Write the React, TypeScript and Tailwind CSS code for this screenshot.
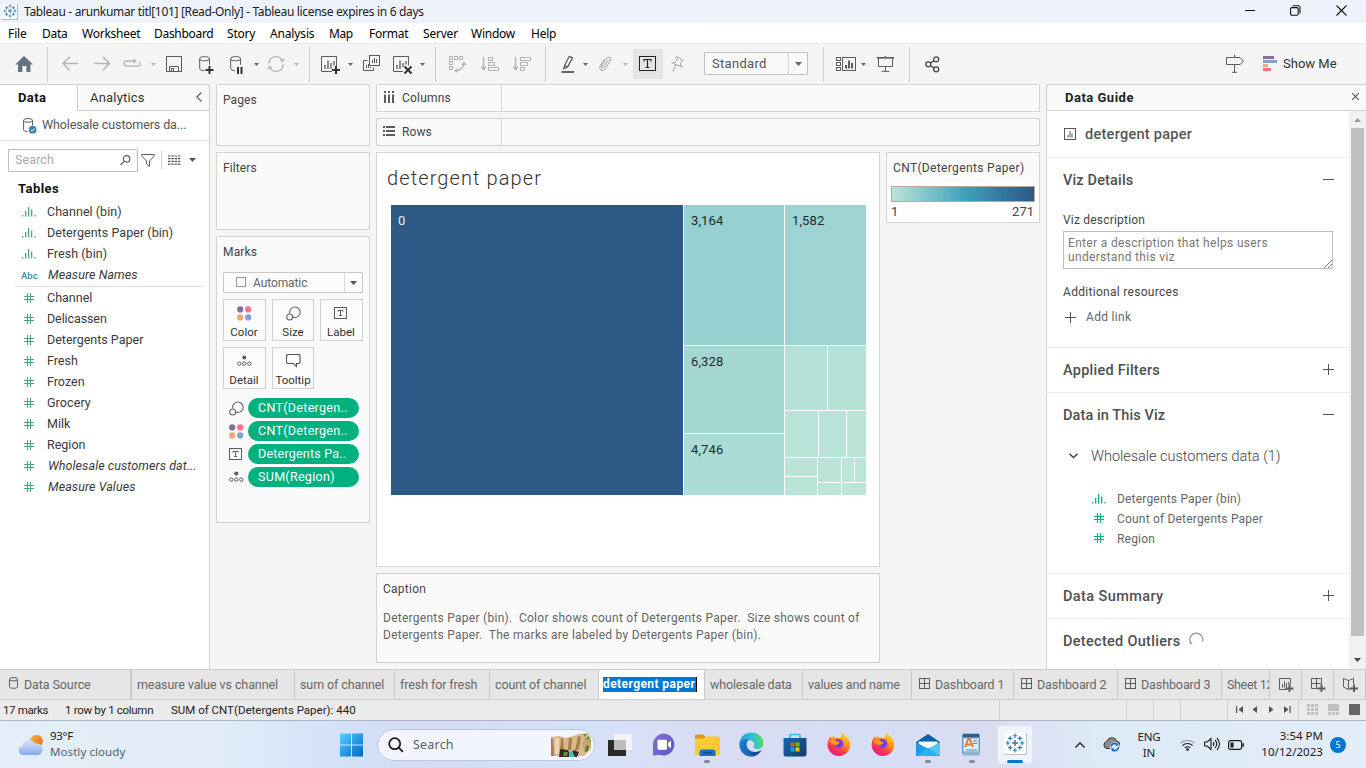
import React from "react";

type IconProps = { w: number; h: number; className?: string; children: React.ReactNode; stroke?: string; fill?: string; sw?: number };

function Svg({ w, h, className = "", children, stroke = "#5c5c5c", fill = "none", sw = 1 }: IconProps) {
  return (
    <svg width={w} height={h} viewBox={`0 0 ${w} ${h}`} className={`block shrink-0 ${className}`} fill={fill} stroke={stroke} strokeWidth={sw}>
      {children}
    </svg>
  );
}

function Cell({ className, children }: { className: string; children?: React.ReactNode }) {
  return <div className={`flex h-full shrink-0 items-center ${className}`}>{children}</div>;
}

function Sep({ className }: { className: string }) {
  return (
    <div className={`flex h-full shrink-0 items-center ${className}`}>
      <div className="mt-[1px] h-[35px] w-px bg-[#cfcfcf]" />
    </div>
  );
}

function Caret({ className = "-ml-[1px]", color = "#666" }: { className?: string; color?: string }) {
  return (
    <Svg w={5} h={3} className={className} stroke="none" fill={color}>
      <path d="M0 0h5L2.5 3z" />
    </Svg>
  );
}

function Sparkle({ size }: { size: number }) {
  return (
    <svg width={size} height={size} viewBox="0 0 20 20" fill="none" className="block shrink-0">
      <g stroke="#2f7fae" strokeWidth="1.3">
        <path d="M10 7v6M7 10h6" stroke="#4c7389" strokeWidth="1.5" />
        <path d="M10 0.6v4.4M7.8 2.8h4.4M10 15v4.4M7.8 17.2h4.4M0.6 10H5M2.8 7.8v4.4M15 10h4.4M17.2 7.8v4.4" strokeWidth="1.1" />
        <path d="M5.2 3.2v4.4M3 5.4h4.4M14.8 3.2v4.4M12.6 5.4h4.4M5.2 12.4v4.4M3 14.6h4.4M14.8 12.4v4.4M12.6 14.6h4.4" />
      </g>
    </svg>
  );
}

function BinIcon({ color = "#4aa583" }: { color?: string }) {
  return (
    <Svg w={14} h={10} stroke="none" fill={color}>
      <path d="M0 8h1.3v1.6H0zM3 4h1.3v5.6H3zM6 0h1.3v9.6H6zM9 2.6h1.3v7H9zM12.4 8h1.3v1.6h-1.3z" />
    </Svg>
  );
}

function HashIcon({ color = "#4aa583" }: { color?: string }) {
  return (
    <Svg w={11} h={10} stroke={color}>
      <path d="M3.5 0v10M6.5 0v10" strokeWidth="1.1" />
      <path d="M0 3.5h10M0 6.5h10" />
    </Svg>
  );
}

function SizeIcon() {
  return (
    <Svg w={15} h={15} stroke="#666" sw={1.1}>
      <path d="M3.9 7.6A5.2 5.2 0 1 1 6.8 11" />
      <circle cx="3.7" cy="11" r="3" />
    </Svg>
  );
}

function ColorDots() {
  return (
    <Svg w={15} h={15} stroke="none">
      <circle cx="3.2" cy="3.4" r="3.1" fill="#8a6d9b" />
      <circle cx="11.2" cy="3.4" r="3.1" fill="#fb7185" />
      <circle cx="3.2" cy="11.4" r="3.1" fill="#f2a57a" />
      <circle cx="11.2" cy="11.4" r="3.1" fill="#7fa3cf" />
    </Svg>
  );
}

function LabelIcon() {
  return (
    <Svg w={14} h={12} stroke="#5c5c5c">
      <rect x="0.5" y="0.5" width="12" height="11" />
      <path d="M4 4.6V3.4h5v1.2M6.5 3.4v5.2M5 8.5h3" />
    </Svg>
  );
}

function DetailIcon() {
  return (
    <Svg w={15} h={12} stroke="#5c5c5c">
      <circle cx="7.3" cy="2.6" r="2" fill="#5c5c5c" stroke="none" />
      <circle cx="2.3" cy="8.6" r="1.7" />
      <circle cx="7.3" cy="8.6" r="1.7" />
      <circle cx="12.3" cy="8.6" r="1.7" />
    </Svg>
  );
}

function Plus() {
  return (
    <Svg w={11} h={11} stroke="#555">
      <path d="M0 5.5h11M5.5 0v11" />
    </Svg>
  );
}

const menus = [
  ["File", "w-[34px] tracking-[-0.1px]"],
  ["Data", "w-[40px] tracking-[-0.25px]"],
  ["Worksheet", "w-[72px] tracking-[-0.25px]"],
  ["Dashboard", "w-[73px] tracking-[-0.3px]"],
  ["Story", "w-[43px] tracking-[-0.2px]"],
  ["Analysis", "w-[59px] tracking-[-0.15px]"],
  ["Map", "w-[40px] tracking-[-0.4px]"],
  ["Format", "w-[54px] tracking-[-0.25px]"],
  ["Server", "w-[48px] tracking-[-0.2px]"],
  ["Window", "w-[60px] tracking-[-0.25px]"],
  ["Help", "w-[40px] tracking-[-0.25px]"],
];

function TitleBar() {
  return (
    <div className="flex h-[23px] shrink-0 items-center bg-[linear-gradient(90deg,#eef3fb_0%,#eef3fb_48%,#edf3f8_62%,#eef3fb_80%)] pl-[2px] font-['Noto_Sans',sans-serif]">
      <div className="flex h-[16px] w-[16px] items-center justify-center border-r border-b border-[#b4bcc4] bg-white/50">
        <Sparkle size={14} />
      </div>
      <span className="ml-[6px] pt-[1px] text-[12px] leading-none tracking-[-0.33px] text-[#1b1b1b]">
        Tableau - arunkumar titl[101] [Read-Only] - Tableau license expires in 6 days
      </span>
      <div className="mr-[19px] mb-[2px] ml-auto flex items-center">
        <Svg w={10} h={11} stroke="#111" className="mr-[35px]">
          <path d="M0 5.5h10" />
        </Svg>
        <Svg w={11} h={11} stroke="#111" className="mr-[35px]" sw={1.1}>
          <rect x="0.6" y="2.6" width="7.6" height="7.6" rx="1.4" />
          <path d="M2.6 0.8h5.6a1.8 1.8 0 0 1 1.8 1.8v5.8" />
        </Svg>
        <Svg w={11} h={11} stroke="#111" sw={1.1}>
          <path d="M0.5 0.5l10 10M10.5 0.5l-10 10" />
        </Svg>
      </div>
    </div>
  );
}

function Toolbar() {
  const g = "#b4b4b4";
  return (
    <div className="flex h-[41px] shrink-0 items-center border-t border-[#ececec] bg-[#f5f5f5] pl-[15px]">
      <Cell className="w-[32px]">
        <Svg w={19} h={16} stroke="none" fill="#667180">
          <path d="M9 0L18 8.5h-2.6V16H11.4v-6H7.4v6H3V8.5H0.3z" />
        </Svg>
      </Cell>
      <Sep className="w-[15px]" />
      <Cell className="w-[32px]">
        <Svg w={17} h={15} stroke={g} sw={1.5} className="-mt-[1px]">
          <path d="M16 7.5H1M7.6 0.8L1 7.5l6.6 6.7" />
        </Svg>
      </Cell>
      <Cell className="w-[29px]">
        <Svg w={17} h={15} stroke={g} sw={1.5} className="-mt-[1px]">
          <path d="M0 7.5h15.5M8.8 0.8l6.7 6.7-6.7 6.7" />
        </Svg>
      </Cell>
      <Cell className="w-[28px]">
        <Svg w={19} h={10} stroke={g} sw={1.3} className="-mt-[2px]">
          <path d="M12 3H3.5a2.6 2.6 0 0 0 0 5.2h11a2.6 2.6 0 0 0 2-4.5" />
          <path d="M10.5 0.2l3.4 2.8-3.4 2.8z" fill={g} stroke="none" />
        </Svg>
      </Cell>
      <Cell className="w-[15px]"><Caret className="ml-0" color="#b0b0b0" /></Cell>
      <Cell className="w-[33px]">
        <Svg w={16} h={16}>
          <rect x="0.5" y="0.5" width="15" height="15" />
          <path d="M3.5 15.5v-5h9v5" />
          <rect x="5.5" y="12.5" width="2" height="3" />
        </Svg>
      </Cell>
      <Cell className="w-[31px]">
        <Svg w={15} h={18} className="mt-[1px]">
          <path d="M0.7 2.8v9.9c0 1 1.5 1.9 4.8 2M10.5 2.8v6" />
          <ellipse cx="5.6" cy="2.7" rx="4.9" ry="2.1" />
          <path d="M10.5 10v8M6.5 14h8" stroke="#333" strokeWidth="2" />
        </Svg>
      </Cell>
      <Cell className="w-[25px]">
        <Svg w={15} h={18} className="mt-[1px]">
          <path d="M0.7 2.8v9.9c0 1 1.5 1.9 4.3 2M10.5 2.8v6" />
          <ellipse cx="5.6" cy="2.7" rx="4.9" ry="2.1" />
          <path d="M8 11v7M11.5 11v7" stroke="#333" strokeWidth="2" />
        </Svg>
      </Cell>
      <Cell className="w-[12px]"><Caret /></Cell>
      <Cell className="w-[27px]">
        <Svg w={18} h={16} stroke={g} sw={1.3}>
          <path d="M1.8 7.5A7 7 0 0 1 15 4.5M16.2 8.5A7 7 0 0 1 3 11.5" />
          <path d="M12.5 5l3.8 1 .8-3.8zM5.5 11l-3.8-1-.8 3.8z" fill={g} stroke="none" />
        </Svg>
      </Cell>
      <Cell className="w-[15px]"><Caret className="ml-0" color="#b0b0b0" /></Cell>
      <Sep className="w-[12px]" />
      <Cell className="w-[28px]">
        <Svg w={19} h={18} className="mt-[1px]">
          <path d="M11 15.5H0.5V0.5h15v10" />
          <path d="M4 13V9M7 13V4.5M10 13V7M13 9.5V5" strokeWidth="1.3" />
          <path d="M15 10v8M11 14h8" stroke="#333" strokeWidth="2" />
        </Svg>
      </Cell>
      <Cell className="w-[14px]"><Caret /></Cell>
      <Cell className="w-[30px]">
        <Svg w={18} h={16} className="-mt-[2px]">
          <rect x="6.5" y="0.5" width="10" height="10" />
          <path d="M9.5 8V5M11.5 8V3M13.5 8V4" />
          <path d="M4.5 5.5h-4v10h10v-3" />
          <path d="M3.5 13v-3M5.5 13V9M7.5 13v-1" />
        </Svg>
      </Cell>
      <Cell className="w-[28px]">
        <Svg w={19} h={18} className="mt-[1px]">
          <path d="M10 15.5H0.5V0.5h15v9" />
          <path d="M4 13V9M7 13V4.5M10 11V7M13 8.5V5" strokeWidth="1.3" />
          <path d="M11.5 10.5l7 7M18.5 10.5l-7 7" stroke="#333" strokeWidth="2" />
        </Svg>
      </Cell>
      <Cell className="w-[14px]"><Caret /></Cell>
      <Sep className="w-[14px]" />
      <Cell className="w-[32px]">
        <Svg w={18} h={17} stroke={g} className="mt-[1px]">
          <rect x="0.5" y="0.5" width="3" height="3" /><rect x="5.5" y="0.5" width="3" height="3" /><rect x="10.5" y="0.5" width="3" height="3" />
          <rect x="0.5" y="5.5" width="3" height="3" /><rect x="0.5" y="10.5" width="3" height="3" />
          <path d="M15 7c0 4-3 7.500-8.500 7.800" strokeWidth="1.3" />
          <path d="M12.300 9l2.700-3.500L17.700 9zM8.500 12L5 14.800 8.500 17z" fill={g} stroke="none" />
        </Svg>
      </Cell>
      <Cell className="w-[32px]">
        <Svg w={18} h={16} stroke={g} className="-mt-[1px]">
          <path d="M2.5 1v12M0.3 10.5l2.3 3 2.3-3" strokeWidth="1.4" />
          <rect x="7.5" y="1.5" width="4" height="3" /><rect x="7.5" y="6.5" width="6" height="3" /><rect x="7.5" y="11.5" width="10" height="3" />
        </Svg>
      </Cell>
      <Cell className="w-[32px]">
        <Svg w={18} h={16} stroke={g} className="-mt-[1px]">
          <path d="M2.5 1v12M0.3 10.5l2.3 3 2.3-3" strokeWidth="1.4" />
          <rect x="7.5" y="1.5" width="10" height="3" /><rect x="7.5" y="6.5" width="7" height="3" /><rect x="7.5" y="11.5" width="4" height="3" />
        </Svg>
      </Cell>
      <Sep className="w-[16px]" />
      <Cell className="w-[22px]">
        <Svg w={14} h={19} stroke="#555" className="mt-[1px]">
          <path d="M8.3 1.3l3.2 1.6-4.8 9-3-1.7zM3.7 10.2l-1 3.6 4-1.9" strokeWidth="1.2" strokeLinejoin="round" />
          <path d="M0.5 17h12.5" strokeWidth="2" stroke="#666" />
        </Svg>
      </Cell>
      <Cell className="w-[16px]"><Caret className="ml-0" /></Cell>
      <Cell className="w-[24px]">
        <Svg w={13} h={16} stroke={g} sw={1.2}>
          <path d="M9.5 4L4.7 11c-1 1.6-3 .3-2-1.2L7.5 2.5C9.3-.2 13 1.8 11.3 4.8L6.5 12.5C4 16.3-.8 13.5 1.3 9.5L5.5 3" />
        </Svg>
      </Cell>
      <Cell className="w-[10px]"><Caret className="ml-0" color="#b0b0b0" /></Cell>
      <Cell className="w-[38px]">
        <div className="flex h-[30px] w-[30px] items-center justify-center bg-[#e4e4e4]">
          <Svg w={18} h={16} stroke="#222">
            <rect x="0.5" y="0.5" width="16" height="14" />
            <path d="M5 5.5v-2h7v2M8.5 3.5v8M6.5 11.5h4" strokeWidth="1.2" />
          </Svg>
        </div>
      </Cell>
      <Cell className="w-[33px]">
        <Svg w={13} h={16} stroke={g} sw={1.1} className="-mt-[1px]">
          <path d="M5.5 0.8l6.5 3-1.5 1.5-1 3 1.5 2.5L1 7l3-1 2.5-3zM5.2 9.2L1.5 15.5" />
        </Svg>
      </Cell>
      <Cell className="w-[119px]">
        <div className="-mt-[1px] flex h-[23px] w-[104px] items-center rounded-[1px] border border-[#c4c4c4] bg-[#fafafa]">
          <span className="w-[84px] pb-[1px] pl-[7px] text-[13px] leading-none tracking-[0.3px] text-[#555]">Standard</span>
          <div className="flex h-full w-[19px] items-center justify-center border-l border-[#d8d8d8]">
            <Svg w={7} h={4} stroke="none" fill="#666"><path d="M0 0h7L3.5 4z" /></Svg>
          </div>
        </div>
      </Cell>
      <Sep className="w-[13px]" />
      <Cell className="w-[25px]">
        <Svg w={20} h={14}>
          <rect x="0.5" y="0.5" width="4" height="3" /><rect x="0.5" y="5.5" width="4" height="3" /><rect x="0.5" y="10.5" width="4" height="3" />
          <rect x="6.5" y="0.5" width="13" height="13" />
          <path d="M10 11.5V8M13 11.5V3.5M16 11.5V6" strokeWidth="2" />
        </Svg>
      </Cell>
      <Cell className="w-[16px]"><Caret className="ml-0" /></Cell>
      <Cell className="w-[32px]">
        <Svg w={17} h={16}>
          <path d="M0 1.8h17" strokeWidth="1.6" />
          <path d="M1.5 2v8.5h14V2M8.5 0v2M8.5 10.5v5M4.5 15.3h8" />
        </Svg>
      </Cell>
      <Sep className="w-[16px]" />
      <Cell className="w-[301px]">
        <Svg w={15} h={17} stroke="#444" sw={1.3}>
          <circle cx="3.3" cy="8.3" r="2.5" /><circle cx="11.2" cy="3.3" r="2.5" /><circle cx="11.2" cy="13.3" r="2.5" />
          <path d="M5.5 7L9 4.6M5.5 9.7L9 12" />
        </Svg>
      </Cell>
      <Cell className="w-[37px]">
        <Svg w={19} h={18}>
          <path d="M0.5 2.5H14l3.5 3.7L14 9.5H0.5zM8.5 0v2.5M8.5 9.5v8M6 17.3h5" />
        </Svg>
      </Cell>
      <Svg w={14} h={15} stroke="none" className="-mt-[2px]">
        <path d="M0 0h11v3H0z" fill="#8a6d9b" /><path d="M0 4h14v3H0z" fill="#7fa3cf" /><path d="M0 8h5v3H0z" fill="#f7a57b" /><path d="M0 12h8v3H0z" fill="#fb6a80" />
      </Svg>
      <span className="ml-[6px] pb-[2px] text-[13px] leading-none whitespace-nowrap text-[#333]">Show Me</span>
    </div>
  );
}

function Field({ kind, label, italic, cls = "" }: { kind: "bin" | "hash" | "abc"; label: string; italic?: boolean; cls?: string }) {
  return (
    <div className="flex h-[21px] items-center text-[12.5px] leading-none text-[#3a3a3a]">
      <div className="flex w-[47px] items-center pl-[22px]">
        {kind === "bin" && <BinIcon />}
        {kind === "hash" && <div className="pl-[2px]"><HashIcon /></div>}
        {kind === "abc" && <span className="-ml-[1px] pt-[2px] text-[9.5px] font-medium text-[#3b87a5]">Abc</span>}
      </div>
      <span className={`pt-[2px] whitespace-nowrap ${italic ? "pl-[1px] tracking-[0.08px] italic" : ""} ${cls}`}>{label}</span>
    </div>
  );
}

function DataPane() {
  return (
    <div className="flex w-[210px] shrink-0 flex-col border-t border-r border-[#d0d0d0] bg-white">
      <div className="flex h-[26px]">
        <div className="flex w-[77px] items-center pb-[1px] pl-[18px] text-[13px] leading-none font-bold tracking-[0.4px] text-[#111]">Data</div>
        <div className="flex flex-1 items-center border-b border-l border-[#d0d0d0] bg-[#fafafa] pb-[1px] pl-[12px] text-[13px] leading-none tracking-[0.2px] text-[#333]">
          Analytics
          <Svg w={6} h={10} className="-mt-[1px] mr-[7px] ml-auto" sw={1.2}><path d="M5.5 0.5L0.8 5l4.7 4.5" /></Svg>
        </div>
      </div>
      <div className="flex h-[30px] items-center border-b border-[#e2e2e2] pl-[23px] text-[12.5px] leading-none tracking-[-0.1px] text-[#555]">
        <Svg w={14} h={16} className="mt-[1px]">
          <path d="M0.6 2.4v9.5c0 .9 1.5 1.5 4 1.6M9.5 2.4v5" />
          <ellipse cx="5" cy="2.4" rx="4.5" ry="1.9" />
          <circle cx="9.6" cy="11.7" r="3.9" fill="#3b87a5" stroke="none" />
          <path d="M7.8 11.7l1.4 1.4 2.3-2.6" stroke="#fff" />
        </Svg>
        <span className="ml-[5px]">Wholesale customers da...</span>
      </div>
      <div className="mt-[7px] flex h-[24px] items-center pl-[8px]">
        <div className="flex h-[23px] w-[130px] items-center rounded-[1px] border border-[#bdbdbd] pt-[1px] pr-[6px] pl-[6px] text-[12.5px] leading-none tracking-[0.1px] text-[#aaa]">
          Search
          <Svg w={11} h={11} className="ml-auto" sw={1.2}>
            <circle cx="6.6" cy="3.9" r="3.2" /><path d="M4.2 6.4L0.6 10" />
          </Svg>
        </div>
        <Svg w={14} h={13} className="ml-[3px]"><path d="M0.7 0.5h12.4v1.5L8.5 7v5.3L5.5 10V7L0.7 2z" /></Svg>
        <div className="ml-[6px] h-[18px] w-px bg-[#d0d0d0]" />
        <Svg w={13} h={10} className="-mt-[1px] ml-[6px]" stroke="#555" sw={1.2}>
          <path d="M0 1h12.5M0 3.7h12.5M0 6.4h12.5M0 9.1h12.5" strokeDasharray="2.5 0.8" />
        </Svg>
        <Svg w={7} h={4} className="-mt-[1px] ml-[8px]" stroke="none" fill="#555"><path d="M0 0h7L3.5 4z" /></Svg>
      </div>
      <div className="flex h-[29px] items-center pt-[3px] pl-[18px] text-[13px] leading-none font-bold tracking-[0.45px] text-[#111]">Tables</div>
      <Field kind="bin" label="Channel (bin)" cls="tracking-[0.05px]" />
      <Field kind="bin" label="Detergents Paper (bin)" cls="tracking-[0.05px]" />
      <Field kind="bin" label="Fresh (bin)" cls="tracking-[0.05px]" />
      <Field kind="abc" label="Measure Names" italic />
      <div className="mr-[6px] ml-[15px] h-[2px] shrink-0 border-b border-[#e0e0e0]" />
      <Field kind="hash" label="Channel" />
      <Field kind="hash" label="Delicassen" cls="tracking-[-0.1px]" />
      <Field kind="hash" label="Detergents Paper" />
      <Field kind="hash" label="Fresh" />
      <Field kind="hash" label="Frozen" />
      <Field kind="hash" label="Grocery" cls="tracking-[0.1px]" />
      <Field kind="hash" label="Milk" />
      <Field kind="hash" label="Region" />
      <Field kind="hash" label="Wholesale customers dat..." italic />
      <Field kind="hash" label="Measure Values" italic />
    </div>
  );
}

const card = "border border-[#d4d4d4] bg-[#fafafa]";

function MarkButton({ label, children, className }: { label: string; children: React.ReactNode; className: string }) {
  return (
    <div className={`flex h-[42px] flex-col items-center border border-[#d0d0d0] bg-[#fcfcfc] ${className}`}>
      <div className="flex h-[26px] items-center">{children}</div>
      <span className="pt-[1px] text-[11.5px] leading-none whitespace-nowrap text-[#333]">{label}</span>
    </div>
  );
}

function Pill({ icon, label, cls = "tracking-[0.3px]" }: { icon: React.ReactNode; label: string; cls?: string }) {
  return (
    <div className="flex h-[20px] items-center">
      <div className="-ml-[1px] flex w-[19px] items-center">{icon}</div>
      <div className={`flex h-[20px] w-[111px] items-center rounded-full bg-[#00b180] pl-[10px] text-[12.5px] leading-none text-white ${cls}`}>{label}</div>
    </div>
  );
}

function Shelves() {
  return (
    <div className="flex w-[154px] shrink-0 flex-col text-[12px] leading-none text-[#444]">
      <div className={`h-[62px] ${card} pt-[9px] pl-[6px] tracking-[0.1px]`}>Pages</div>
      <div className={`mt-[6px] h-[78px] ${card} pt-[9px] pl-[6px] tracking-[0.1px]`}>Filters</div>
      <div className={`mt-[6px] flex h-[287px] flex-col ${card} pl-[6px]`}>
        <div className="pt-[9px] tracking-[0.15px]">Marks</div>
        <div className="mt-[14px] flex h-[21px] w-[140px] items-center rounded-[1px] border border-[#c8c8c8] bg-[#fcfcfc]">
          <div className="-mt-[1px] ml-[12px] h-[10px] w-[10px] border border-[#999]" />
          <span className="ml-[7px] w-[91px] text-[12px] tracking-[-0.1px] text-[#666]">Automatic</span>
          <div className="flex h-full flex-1 items-center justify-center border-l border-[#d8d8d8]">
            <Svg w={7} h={4} stroke="none" fill="#555"><path d="M0 0h7L3.5 4z" /></Svg>
          </div>
        </div>
        <div className="mt-[6px] flex gap-[6px]">
          <MarkButton label="Color" className="w-[43px] pr-[1px]"><ColorDots /></MarkButton>
          <MarkButton label="Size" className="w-[42px]"><SizeIcon /></MarkButton>
          <MarkButton label="Label" className="w-[43px] pr-[1px]"><LabelIcon /></MarkButton>
        </div>
        <div className="mt-[6px] flex gap-[6px]">
          <MarkButton label="Detail" className="w-[43px] pr-[1px]"><DetailIcon /></MarkButton>
          <MarkButton label="Tooltip" className="w-[42px]">
            <Svg w={15} h={14} stroke="#555"><path d="M1.5 0.5h11.5l1 1v7l-1 1h-2.5v3l-3.200-3H1.500l-1-1v-7z" strokeWidth="1.1" /></Svg>
          </MarkButton>
        </div>
        <div className="mt-[9px] flex flex-col gap-[3px] pl-[7px]">
          <Pill icon={<SizeIcon />} label="CNT(Detergen.." />
          <Pill icon={<ColorDots />} label="CNT(Detergen.." />
          <Pill icon={<LabelIcon />} label="Detergents Pa.." cls="tracking-[0.22px]" />
          <Pill icon={<DetailIcon />} label="SUM(Region)" cls="tracking-[0.3px]" />
        </div>
      </div>
    </div>
  );
}

function Treemap() {
  return (
    <div className="mt-[13px] ml-[14px] flex h-[290px] w-[475px] gap-px text-[13px] leading-none tracking-[0.1px] text-[#1d2b2b]">
      <div className="w-[292px] bg-[#2c5985] pt-[9px] pl-[7px] text-white/90">0</div>
      <div className="flex w-[100px] flex-col gap-px">
        <div className="h-[140px] bg-[#96d0d0] pt-[9px] pl-[7px]">3,164</div>
        <div className="h-[87px] bg-[#a4d7d2] pt-[9px] pl-[7px]">6,328</div>
        <div className="flex-1 bg-[#abdcd5] pt-[9px] pl-[7px]">4,746</div>
      </div>
      <div className="flex w-[81px] flex-col gap-px">
        <div className="h-[140px] bg-[#9dd3d2] pt-[9px] pl-[7px]">1,582</div>
        <div className="flex h-[64px] gap-px">
          <div className="w-[42px] bg-[#b6e1d7]" />
          <div className="w-[38px] bg-[#b6e1d7]" />
        </div>
        <div className="flex h-[46px] gap-px">
          <div className="w-[33px] bg-[#b9e3d8]" />
          <div className="w-[27px] bg-[#b9e3d8]" />
          <div className="w-[19px] bg-[#bae4d8]" />
        </div>
        <div className="flex h-[37px] gap-px">
          <div className="flex w-[32px] flex-col gap-px">
            <div className="flex-1 bg-[#bbe4d9]" />
            <div className="flex-1 bg-[#bbe4d9]" />
          </div>
          <div className="flex w-[48px] flex-col gap-px">
            <div className="flex h-[24px] gap-px">
              <div className="w-[23px] bg-[#bbe4d9]" />
              <div className="w-[12px] bg-[#bce5d9]" />
              <div className="w-[11px] bg-[#bce5d9]" />
            </div>
            <div className="flex h-[12px] gap-px">
              <div className="w-[23px] bg-[#bce5d9]" />
              <div className="w-[24px] bg-[#bce5d9]" />
            </div>
          </div>
        </div>
      </div>
    </div>
  );
}

function Workspace() {
  return (
    <div className="ml-[6px] flex w-[664px] shrink-0 flex-col text-[12px] leading-none text-[#444]">
      <div className={`flex h-[28px] ${card}`}>
        <div className="flex w-[125px] items-center border-r border-[#d4d4d4] pl-[7px]">
          <Svg w={11} h={12} className="-mt-[2px]" stroke="#5c5c5c" sw={2}><path d="M1 0v2M1 3.5V12M5 0v2M5 3.5V12M9 0v2M9 3.5V12" /></Svg>
          <span className="ml-[7px] tracking-[0.2px]">Columns</span>
        </div>
      </div>
      <div className={`mt-[6px] flex h-[28px] ${card}`}>
        <div className="flex w-[125px] items-center border-r border-[#d4d4d4] pl-[6px]">
          <Svg w={12} h={10} className="-mt-[2px]" stroke="#5c5c5c" sw={2}><path d="M0 1h2M3 1h9M0 5h2M3 5h9M0 9h2M3 9h9" /></Svg>
          <span className="ml-[7px] tracking-[0.1px]">Rows</span>
        </div>
      </div>
      <div className="mt-[6px] flex">
        <div className="w-[504px]">
          <div className="h-[415px] border border-[#d4d4d4] bg-white">
            <div className="flex h-[39px] items-end pl-[10px] text-[20px] leading-[27px] font-light tracking-[1.1px] text-[#333]">detergent paper</div>
            <Treemap />
          </div>
          <div className={`mt-[6px] h-[90px] ${card} pl-[6px]`}>
            <div className="pt-[9px] tracking-[0.25px]">Caption</div>
            <div className="mt-[15px] text-[12px] leading-[17px] tracking-[0.27px] whitespace-pre text-[#666]">{"Detergents Paper (bin).  Color shows count of Detergents Paper.  Size shows count of\nDetergents Paper.  The marks are labeled by Detergents Paper (bin)."}</div>
          </div>
        </div>
        <div className="ml-[6px] flex h-[71px] w-[154px] flex-col border border-[#d4d4d4] bg-white">
          <div className="flex h-[30px] items-center bg-[#fafafa] pl-[6px] tracking-[0.35px]">CNT(Detergents Paper)</div>
          <div className="mx-[4px] mt-[3px] h-[16px] border border-[#b5a99c] bg-[linear-gradient(90deg,#bce4d8_0%,#7fc4ca_25%,#3fa0ba_52%,#35769f_78%,#2c5985_100%)]" />
          <div className="flex justify-between pt-[3px] pr-[5px] pl-[4px] text-[13px]">
            <span>1</span>
            <span>271</span>
          </div>
        </div>
      </div>
    </div>
  );
}

function GuideHeading({ label, open, cls }: { label: string; open: boolean; cls: string }) {
  return (
    <div className="flex h-[44px] items-center justify-between pr-[15px] text-[14.5px] leading-none font-medium text-[#4f4f4f]">
      <span className={`pt-[2px] ${cls}`}>{label}</span>
      {open ? <Svg w={11} h={1} className="-mt-[1px]" stroke="#555"><path d="M0 0.5h11" /></Svg> : <div className="-mt-[1px]"><Plus /></div>}
    </div>
  );
}

function DataGuide() {
  return (
    <div className="ml-[6px] flex flex-1 flex-col border-t border-l border-[#d0d0d0] bg-white">
      <div className="flex h-[26px] shrink-0 items-center justify-between border-b border-[#d4d4d4] bg-[#fafafa] pr-[7px] pl-[18px] text-[13px] leading-none font-bold tracking-[0.5px] text-[#222]">
        Data Guide
        <Svg w={7} h={7} sw={1.2} className="-mt-[2px]"><path d="M0 0l7 7M7 0L0 7" /></Svg>
      </div>
      <div className="flex min-h-0 flex-1">
        <div className="flex flex-1 flex-col overflow-hidden text-[12px] leading-none text-[#555]">
          <div className="flex h-[47px] shrink-0 items-center border-b border-[#ececec] pl-[17px]">
            <Svg w={12} h={12} stroke="#555">
              <rect x="0.5" y="0.5" width="11" height="11" />
              <path d="M3 9.5V7h2V3h2v2.5h2v4z" fill="#aaa" stroke="none" />
            </Svg>
            <span className="ml-[9px] pt-[2px] text-[14.5px] font-medium tracking-[0.28px] text-[#555]">detergent paper</span>
          </div>
          <div className="h-[190px] shrink-0 border-b border-[#ececec] pl-[16px]">
            <GuideHeading label="Viz Details" open cls="tracking-[0.15px]" />
            <div className="pt-[12px] tracking-[0.2px] text-[#444]">Viz description</div>
            <div className="relative mt-[5px] h-[38px] w-[270px] border border-[#bdbdbd] py-[4px] pl-[4px] leading-[14px] tracking-[0.33px] text-[#777]">
              Enter a description that helps users
              <br />
              understand this viz
              <Svg w={8} h={8} className="absolute right-0 bottom-0" stroke="#777"><path d="M0 8l8-8M4 8l4-4" /></Svg>
            </div>
            <div className="pt-[17px] tracking-[0.3px] text-[#444]">Additional resources</div>
            <div className="flex items-center pt-[13px] pl-[2px] tracking-[0.3px] text-[#666]">
              <Plus />
              <span className="ml-[10px]">Add link</span>
            </div>
          </div>
          <div className="h-[45px] shrink-0 border-b border-[#ececec] pl-[16px]"><GuideHeading label="Applied Filters" open={false} cls="tracking-[0.25px]" /></div>
          <div className="h-[181px] shrink-0 border-b border-[#ececec] pl-[16px]">
            <GuideHeading label="Data in This Viz" open cls="tracking-[0.1px]" />
            <div className="mt-[12px] flex h-[14px] items-center pl-[6px]">
              <Svg w={9} h={6} stroke="#333" sw={1.3}><path d="M0.5 0.7l4 4 4-4" /></Svg>
              <span className="ml-[13px] pt-[2px] text-[14.5px] font-light tracking-[-0.02px] text-[#444]">Wholesale customers data (1)</span>
            </div>
            <div className="mt-[26px] flex flex-col pl-[29px] text-[12px] tracking-[0.19px] text-[#666]">
              <div className="flex h-[20px] items-center"><div className="w-[25px] pb-[1px]"><BinIcon color="#00b180" /></div>Detergents Paper (bin)</div>
              <div className="flex h-[20px] items-center"><div className="w-[25px] pb-[2px] pl-[2px]"><HashIcon color="#00b180" /></div>Count of Detergents Paper</div>
              <div className="flex h-[20px] items-center"><div className="w-[25px] pb-[2px] pl-[2px]"><HashIcon color="#00b180" /></div>Region</div>
            </div>
          </div>
          <div className="h-[45px] shrink-0 border-b border-[#ececec] pl-[16px]"><GuideHeading label="Data Summary" open={false} cls="tracking-[0.4px]" /></div>
          <div className="flex h-[44px] shrink-0 items-center pl-[16px] text-[14.5px] font-medium tracking-[0.3px] text-[#4f4f4f]">
            <span className="pt-[2px]">Detected Outliers</span>
            <Svg w={15} h={15} className="mb-[4px] ml-[8px]" stroke="#999" sw={1.5}>
              <path d="M2.8 12.2A6.4 6.4 0 1 1 13.4 9.500" />
            </Svg>
          </div>
        </div>
        <div className="flex w-[17px] flex-col items-center bg-[#f1f1f1]">
          <Svg w={7} h={4} className="mt-[7px]" stroke="none" fill="#999"><path d="M0 4h7L3.5 0z" /></Svg>
          <div className="mt-[6px] h-[508px] w-[13px] bg-[#c1c1c1]" />
          <Svg w={7} h={4} className="mt-[22px]" stroke="none" fill="#444"><path d="M0 0h7L3.5 4z" /></Svg>
        </div>
      </div>
    </div>
  );
}

function GridIcon() {
  return (
    <Svg w={12} h={12} className="-mt-[1px]"><rect x="0.5" y="0.5" width="10" height="10" /><path d="M5.5 0.5v10M0.5 5.5h10" /></Svg>
  );
}

function SheetTabs() {
  const t = "flex shrink-0 items-center border-r border-[#c8c8c8] whitespace-nowrap";
  return (
    <div className="flex h-[31px] shrink-0 border-t border-b border-[#cdcdcd] bg-[#e6e6e6] text-[12.5px] leading-none tracking-[-0.1px] text-[#666]">
      <div className="flex w-[132px] shrink-0 items-center border-r-2 border-[#c8c8c8] pl-[9px]">
        <Svg w={10} h={12} className="-mt-[3px]"><path d="M0.5 2.2v7.6c0 2 8 2 8 0V2.2" /><ellipse cx="4.5" cy="2.2" rx="4" ry="1.7" /></Svg>
        <span className="ml-[5px] pt-[2px]">Data Source</span>
      </div>
      <div className={`w-[163px] pt-[2px] pl-[5px] ${t}`}>measure value vs channel</div>
      <div className={`w-[100px] pt-[2px] pl-[5px] ${t}`}>sum of channel</div>
      <div className={`w-[95px] pt-[2px] pl-[5px] ${t}`}>fresh for fresh</div>
      <div className={`w-[109px] pt-[2px] pl-[5px] ${t}`}>count of channel</div>
      <div className={`w-[106px] bg-white pl-[4px] ${t}`}>
        <span className="mb-[1px] flex h-[15px] w-[94px] items-center border-r border-black bg-[#0078d7] text-[12px] font-bold tracking-[0.42px] text-white">detergent paper</span>
      </div>
      <div className={`w-[98px] pt-[2px] pl-[5px] tracking-[-0.15px] ${t}`}>wholesale data</div>
      <div className={`w-[109px] pt-[2px] pl-[5px] tracking-[-0.15px] ${t}`}>values and name</div>
      <div className={`w-[102px] gap-[4px] pl-[7px] ${t}`}><GridIcon /><span className="pt-[2px]">Dashboard 1</span></div>
      <div className={`w-[104px] gap-[4px] pl-[7px] ${t}`}><GridIcon /><span className="pt-[2px]">Dashboard 2</span></div>
      <div className={`w-[104px] gap-[4px] pl-[7px] ${t}`}><GridIcon /><span className="pt-[2px]">Dashboard 3</span></div>
      <div className={`w-[48px] overflow-hidden pt-[2px] pl-[5px] tracking-[-0.35px] ${t}`}>Sheet 12</div>
      <div className={`w-[32px] pl-[9px] ${t}`}>
        <Svg w={15} h={14}><path d="M8 11.5H0.5V0.5h11v6M3.5 9.5V6M5.5 9.5V3M7.5 9.5V5M9.5 6.5V4" /><path d="M10.5 6.5v8M6.5 10.5h8" strokeWidth="2" /></Svg>
      </div>
      <div className={`w-[32px] pl-[9px] ${t}`}>
        <Svg w={15} h={14}><path d="M8 10.5H0.5V0.5h10v5M5.5 0.5v10M0.5 5.5h10" /><path d="M10.5 6.5v8M6.5 10.5h8" strokeWidth="2" /></Svg>
      </div>
      <div className={`w-[32px] pl-[9px] ${t}`}>
        <Svg w={16} h={14}><path d="M5.5 2.5v9L0.5 9V0.5zM5.5 2.5l5-2V6M5.5 11.5l2-1" /><path d="M11 6.5v8M7 10.5h8" strokeWidth="2" /></Svg>
      </div>
    </div>
  );
}

function StatusBar() {
  return (
    <div className="flex h-[21px] shrink-0 items-center border-b border-[#aeb4c2] bg-[#ebebeb] text-[11.5px] leading-none whitespace-nowrap text-[#222]">
      <span className="w-[62px] pt-[2px] pl-[3px] tracking-[-0.35px]">17 marks</span>
      <span className="w-[106px] pt-[2px] pl-[3px] tracking-[-0.3px]">1 row by 1 column</span>
      <span className="pt-[2px] pl-[3px]">SUM of CNT(Detergents Paper): 440</span>
      <div className="ml-auto flex h-full">
        <div className="w-[127px] border-l border-[#cfcfcf]" />
        <div className="w-[27px] border-l border-[#cfcfcf]" />
        <div className="w-[27px] border-l border-[#cfcfcf]" />
        <div className="w-[47px] border-l border-[#cfcfcf]" />
        <div className="flex w-[71px] items-center border-l border-[#cfcfcf] pl-[8px]">
          <Svg w={57} h={7} stroke="none" fill="#555" className="-mt-[1px]">
            <path d="M0 0h1.2v7H0zM7 0v7L2.5 3.5zM21 0v7l-4.5-3.5zM33 0v7l4.5-3.5zM48 0v7l4.5-3.5zM53.5 0h1.2v7h-1.2z" />
          </Svg>
        </div>
        <div className="flex w-[68px] items-center border-l border-[#cfcfcf] pl-[8px]">
          <Svg w={55} h={12} stroke="none" fill="#c0c0c0">
            <path d="M0 0h3v3H0zM4 0h3v3H4zM8 0h3v3H8zM0 4h3v3H0zM4 4h3v3H4zM8 4h3v3H8zM0 8h3v3H0zM4 8h3v3H4zM8 8h3v3H8z" />
            <path d="M21 0h11v7H21zM21 8h3v3h-3zM25 8h3v3h-3zM29 8h3v3h-3z" />
            <path d="M42 0h11v11H42z" fill="#666" />
          </Svg>
        </div>
      </div>
    </div>
  );
}

function Firefox({ id }: { id: string }) {
  return (
    <svg width="24" height="24" viewBox="0 0 24 24" className="mb-[2px] block shrink-0">
      <defs>
        <linearGradient id={`${id}a`} x1="0.8" y1="0" x2="0.25" y2="1">
          <stop offset="0" stopColor="#ffe23e" /><stop offset="0.4" stopColor="#ff980e" /><stop offset="0.7" stopColor="#ff3750" /><stop offset="1" stopColor="#e3158a" />
        </linearGradient>
        <radialGradient id={`${id}b`}><stop offset="0" stopColor="#5a3ee0" /><stop offset="1" stopColor="#9c3ed8" /></radialGradient>
      </defs>
      <path d="M15.5 0.3c1 2.3 3.4 3.3 5 5.7 1-.3 2.8 3 2.8 6.5C23.3 19 18.2 24 12 24S0.6 19 0.6 13c0-4 1.4-7 3.2-9l.8 2.6L6.7 4l.8 1.8c1.8-.6 3.5-.6 5.3.4 1.3-1.5 2-3.7 2.7-5.9z" fill={`url(#${id}a)`} />
      <path d="M8 7.5c2.5-1.3 6-.8 7.7 1.7 2 3-.2 7.6-4.2 7.3-3-.2-4.6-2.3-4.2-4.5z" fill={`url(#${id}b)`} />
      <path d="M2.5 9.5c2-1.7 4.3-2 6-1.5 1 2 2.8 2 4.3 2.3-.7 1.9-2.6 1.6-3.4 2.9-2.4-.8-4.6-.7-6.9-3.7z" fill="#ff9a1e" />
    </svg>
  );
}

function AppSlot({ children, className, dot }: { children: React.ReactNode; className: string; dot?: string }) {
  return (
    <div className={`flex h-full shrink-0 flex-col items-center ${className}`}>
      <div className="flex h-[47px] items-center">{children}</div>
      {dot && <div className={`-mt-[8px] h-[3px] shrink-0 rounded-full ${dot}`} />}
    </div>
  );
}

function Taskbar() {
  return (
    <div className="flex h-[47px] shrink-0 items-center bg-[linear-gradient(90deg,#e4eef8_0%,#e1ecf8_16%,#d3e2f9_25%,#d5dcf6_31%,#d6e2f9_42%,#d9dcf2_55%,#d5dff6_63%,#dadcf0_72%,#dce9f7_80%,#e3edf8_100%)] font-['Noto_Sans',sans-serif] text-[12px] leading-none text-[#1a1a1a]">
      <div className="flex w-[339px] shrink-0 items-center pl-[18px]">
        <svg width="26" height="22" viewBox="0 0 26 22" className="mr-[6px] block">
          <defs>
            <linearGradient id="sun" x1="0" y1="0" x2="1" y2="1"><stop offset="0" stopColor="#f5c23a" /><stop offset="1" stopColor="#ee5a16" /></linearGradient>
            <linearGradient id="cloud" x1="0" y1="0" x2="0" y2="1"><stop offset="0" stopColor="#d3e2fb" /><stop offset="0.6" stopColor="#a9c4f2" /><stop offset="1" stopColor="#7fa6e6" /></linearGradient>
          </defs>
          <circle cx="18.5" cy="7" r="6.3" fill="url(#sun)" />
          <path d="M5 21a4.7 4.7 0 0 1-.3-9.3A7 7 0 0 1 17.5 9.5a5.8 5.8 0 0 1 2.6 11.5z" fill="url(#cloud)" />
        </svg>
        <div className="-mt-[2px] flex flex-col text-[11.5px]">
          <span className="tracking-[-0.3px]">93°F</span>
          <span className="mt-[4px] tracking-[0.08px] text-[#55606c]">Mostly cloudy</span>
        </div>
      </div>
      <svg width="24" height="24" viewBox="0 0 24 24" className="mt-[1px] block shrink-0">
        <defs><linearGradient id="win" x1="0" y1="0" x2="1" y2="1"><stop offset="0" stopColor="#4fd2ff" /><stop offset="1" stopColor="#0067c8" /></linearGradient></defs>
        <path d="M1 0.5h11v11H1zM13 0.5h11v11H13zM1 12.5h11v11H1zM13 12.5h11v11H13z" fill="url(#win)" />
      </svg>
      <div className="ml-[14px] flex h-[32px] w-[218px] shrink-0 items-center overflow-hidden rounded-full border border-[#bcc7e0] bg-[#f2f5fd] pl-[10px]">
        <Svg w={16} h={16} stroke="#1d1d1d" sw={1.8}><circle cx="6.7" cy="6.7" r="5.5" /><path d="M10.7 10.7l4.2 4.2" /></Svg>
        <span className="ml-[9px] pt-[1px] text-[12.5px] tracking-[0.2px] text-[#5a5f69]">Search</span>
        <svg width="44" height="24" viewBox="0 0 44 24" className="mr-[1px] ml-auto block">
          <path d="M2 4l8-1 6 2 8-2 6-2 9-1 3 7v9l-7 7H4z" fill="#d9b88a" />
          <path d="M2 5l2 1 1 17H2zM12 5l2 0 1 13-4 2zM20 5h3l-1 12h-3zM29 3l3 1-2 12-4 2z" fill="#a97c4e" />
          <path d="M6 5h4v16H6z" fill="#ecd5ae" /><path d="M11 16l8 1 3 7H10zM24 17l6 2-2 5h-5z" fill="#3a2b1e" />
          <path d="M20 19l3-1 3 6h-6z" fill="#4bb8c4" /><path d="M36 6l4-3 2 5-3 4zM34 1l4 0-2 3zM15 19l4 0-1 4-4 0z" fill="#5d9a32" />
          <path d="M33 9c2-3 5-1 7-4l2 7-6 9z" fill="#cda26e" /><path d="M37 12l3 1-1 5-3 1z" fill="#4d7d2b" />
        </svg>
      </div>
      <AppSlot className="w-[47px]">
        <svg width="24" height="22" viewBox="0 0 24 22" className="ml-[2px] block">
          <path d="M0 6h18v16H0z" fill="#2a2a2a" /><path d="M6 0h18v16H6z" fill="#f3f3f3" /><path d="M6 6h12v10H6z" fill="#bdbdbd" />
        </svg>
      </AppSlot>
      <AppSlot className="w-[43px]">
        <svg width="24" height="23" viewBox="0 0 24 23" className="block">
          <defs><linearGradient id="chat" x1="0" y1="0" x2="1" y2="1"><stop offset="0" stopColor="#8f6fd0" /><stop offset="1" stopColor="#4f55c8" /></linearGradient></defs>
          <path d="M12 0.5a11 11 0 1 1-4.5 21.3L1 22.5V13A11.3 11.3 0 0 1 12 0.5z" fill="url(#chat)" />
          <rect x="5.5" y="6.7" width="9.5" height="10" rx="1" fill="#fff" /><path d="M16 10l3-2.5v8L16 13z" fill="#fff" />
        </svg>
      </AppSlot>
      <AppSlot className="w-[44px]" dot="w-[6px] bg-[#84889a]">
        <svg width="25" height="22" viewBox="0 0 25 22" className="block">
          <path d="M0 2a1.5 1.5 0 0 1 1.5-1.5h7L11 3v5H0z" fill="#d99a10" />
          <path d="M0 4.5h9l2-2h12.5A1.5 1.5 0 0 1 25 4v17H0z" fill="#fcc835" />
          <path d="M4.5 22v-4a2.5 2.5 0 0 1 2.5-2.5h11a2.5 2.5 0 0 1 2.5 2.5v4z" fill="#1173c4" /><path d="M8 18h9v1.5H8z" fill="#0b4d92" />
        </svg>
      </AppSlot>
      <AppSlot className="w-[44px]">
        <svg width="25" height="25" viewBox="0 0 25 25" className="block">
          <defs>
            <linearGradient id="ed1" x1="0" y1="0.4" x2="1" y2="0.3"><stop offset="0" stopColor="#1f9de0" /><stop offset="0.6" stopColor="#2fc6cf" /><stop offset="1" stopColor="#66d84e" /></linearGradient>
            <linearGradient id="ed2" x1="0" y1="0" x2="1" y2="1"><stop offset="0" stopColor="#1788dc" /><stop offset="1" stopColor="#0d3f86" /></linearGradient>
          </defs>
          <path d="M0.5 11C1.5 4.5 6.5.5 12.5.5c6.7 0 12 5 12 10.5 0 4-3 6-6 6-3.3 0-4.5-1.3-4-2.4 2-2.8-.2-6.4-4.2-6.4C5.5 8.2 1.500 10 .5 13z" fill="url(#ed1)" />
          <path d="M0.5 12.5c.5-4.3 6-6.3 9.5-4.600-3 1.500-3.500 6.500 0 9.800 3 2.800 8.500 3 12.500.3C20.500 22 17 24.500 12.500 24.500 5.500 24.500.3 19 .5 12.500z" fill="url(#ed2)" />
          <path d="M7.5 12c-1.500 5 2.500 10.500 8 12-8 1.500-14-3.500-13-9z" fill="#1572c4" opacity="0.8" />
        </svg>
      </AppSlot>
      <AppSlot className="w-[44px]">
        <svg width="24" height="24" viewBox="0 0 24 24" className="block">
          <defs><linearGradient id="st" x1="0" y1="0" x2="1" y2="1"><stop offset="0" stopColor="#0e6cbb" /><stop offset="1" stopColor="#173a66" /></linearGradient></defs>
          <path d="M7 6V2.5A1 1 0 0 1 8 1.5h8a1 1 0 0 1 1 1V6" fill="none" stroke="#38b8ee" strokeWidth="1.7" />
          <path d="M0.5 5h23v16a2.5 2.5 0 0 1-2.5 2.500H3A2.500 2.500 0 0 1 .5 21z" fill="url(#st)" />
          <path d="M7.5 9.5h4v4h-4z" fill="#f25022" /><path d="M12.5 9.5h4v4h-4z" fill="#7fba00" /><path d="M7.5 14.5h4v4h-4z" fill="#00a4ef" /><path d="M12.5 14.5h4v4h-4z" fill="#ffb900" />
        </svg>
      </AppSlot>
      <AppSlot className="w-[44px]"><Firefox id="fa" /></AppSlot>
      <AppSlot className="w-[44px]"><Firefox id="fb" /></AppSlot>
      <AppSlot className="w-[45px]" dot="w-[6px] bg-[#84889a]">
        <svg width="26" height="24" viewBox="0 0 26 24" className="block">
          <path d="M1 9L13 1l12 8v14H1z" fill="#0a5ea8" /><path d="M3.5 8.5h19V17h-19z" fill="#f4f8fc" /><path d="M1 9l12 7-12 7z" fill="#1b9be8" /><path d="M25 9l-12 7L25 23z" fill="#52c7f5" /><path d="M1 23l12-8.5L25 23z" fill="#27b3f2" />
        </svg>
      </AppSlot>
      <AppSlot className="w-[44px]" dot="w-[6px] bg-[#84889a]">
        <svg width="20" height="23" viewBox="0 0 20 23" className="block">
          <rect x="0.5" y="1" width="17" height="20" rx="1" fill="#a9c8e4" stroke="#6f94b6" /><path d="M1 1h16v3.5H1z" fill="#2a5f8f" />
          <path d="M2 6h14v12H2z" fill="#dcecf8" /><path d="M11 8h4M11 10.5h4M4 17h11" stroke="#5b86b0" />
          <path d="M3 14L6.3 6h1.4L11 14M4.5 11.5h5" stroke="#e8742a" strokeWidth="1.8" fill="none" /><path d="M1 18.5h18l-2 4H1z" fill="#8fb3d2" />
        </svg>
      </AppSlot>
      <div className="-mt-[1px] ml-[3px] flex h-[39px] w-[36px] shrink-0 flex-col items-center rounded-[4px] border border-[#dfe5f5] bg-[#eff3fc]">
        <div className="mt-[7px] ml-[1px] flex h-[23px] w-[23px] items-center justify-center border-r border-b border-[#b9c1cb] bg-white"><Sparkle size={20} /></div>
        <div className="mt-[5px] h-[3px] w-[16px] shrink-0 rounded-full bg-[#0078d4]" />
      </div>
      <Svg w={10} h={6} className="ml-[42px]" stroke="#1a1a1a" sw={1.3}><path d="M0.5 5.5L5 1l4.5 4.5" /></Svg>
      <svg width="17" height="15" viewBox="0 0 17 15" className="ml-[18px] block shrink-0">
        <path d="M4 11.5a3.5 3.5 0 0 1-.3-6.9A5.3 5.3 0 0 1 13.7 4 3.8 3.8 0 0 1 15 11z" fill="#8b8b8b" stroke="#333" strokeWidth="1" />
        <circle cx="11.8" cy="10" r="5" fill="#e3edf8" /><circle cx="11.8" cy="10" r="3.6" fill="none" stroke="#1469c0" strokeWidth="1.6" strokeDasharray="8.5 2.800" />
        <path d="M14 5.500l1.800 3.200-3.600-.3zM9.600 14.500l-1.800-3.200 3.600.3z" fill="#1469c0" />
      </svg>
      <div className="ml-[15px] flex w-[28px] shrink-0 flex-col items-center gap-[4px] text-[11.5px]"><span className="tracking-[-0.2px]">ENG</span><span>IN</span></div>
      <svg width="15" height="12" viewBox="0 0 15 12" fill="none" className="ml-[17px] block shrink-0">
        <path d="M0.5 4.3a10 10 0 0 1 14 0" stroke="#9aa4ae" strokeWidth="1.2" /><path d="M2.5 6.6a7 7 0 0 1 10 0M4.7 8.9a4 4 0 0 1 5.6 0" stroke="#1a1a1a" strokeWidth="1.2" /><circle cx="7.5" cy="10.6" r="1.3" fill="#1a1a1a" />
      </svg>
      <Svg w={17} h={14} className="-mt-[1px] ml-[9px]" stroke="#1a1a1a" sw={1.1}>
        <path d="M0.6 5h2.6L7 1.5v11L3.2 9H0.6zM9 5a3 3 0 0 1 0 4M11 3a5.5 5.5 0 0 1 0 8M13 1a8.500 8.500 0 0 1 0 12" />
      </Svg>
      <Svg w={17} h={10} className="ml-[7px]" stroke="#1a1a1a" sw={1.2}><rect x="0.6" y="0.6" width="13" height="8.8" rx="1.8" /><path d="M2.5 2.5h3v5h-3z" fill="#1a1a1a" stroke="none" /><path d="M15.2 3.3v3.4" strokeWidth="1.5" /></Svg>
      <div className="-mt-[2px] ml-auto flex shrink-0 flex-col items-end gap-[4px] text-[11.5px] whitespace-nowrap"><span>3:54 PM</span><span className="tracking-[0.05px]">10/12/2023</span></div>
      <div className="mr-[20px] ml-[7px] flex h-[16px] w-[16px] shrink-0 items-center justify-center rounded-full bg-[#0078d4] text-[9px] text-white">5</div>
    </div>
  );
}

export default function App() {
  return (
    <div className="flex h-[768px] w-[1366px] flex-col overflow-hidden bg-[#f5f5f5] font-['Roboto','Liberation_Sans',sans-serif]">
      <TitleBar />
      <div className="flex h-[20px] shrink-0 items-center bg-white pt-[2px] pl-[8px] font-['Noto_Sans',sans-serif] text-[12px] leading-none text-black">
        {menus.map(([label, cls]) => (
          <span key={label} className={`shrink-0 whitespace-nowrap ${cls}`}>{label}</span>
        ))}
      </div>
      <Toolbar />
      <div className="flex h-[585px] shrink-0">
        <DataPane />
        <div className="ml-[6px] flex"><Shelves /></div>
        <Workspace />
        <DataGuide />
      </div>
      <SheetTabs />
      <StatusBar />
      <Taskbar />
    </div>
  );
}
